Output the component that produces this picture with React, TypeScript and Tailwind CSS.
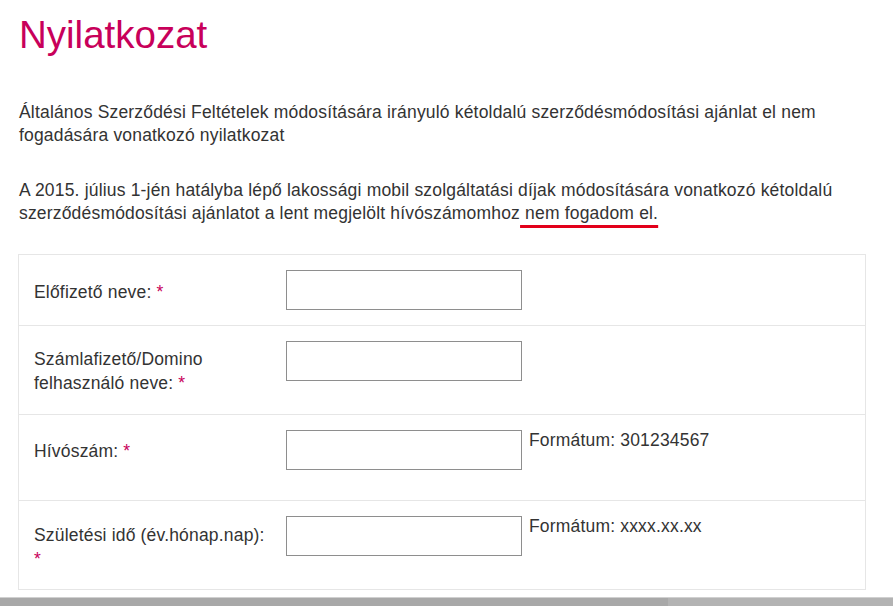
import React from 'react';

type Row = {
    label: React.ReactNode;
    hint?: string;
    h: string;
    pt: string;
};

const Star = () => <span className="text-[#c8005a]">*</span>;

const rows: Row[] = [
    { label: <>Előfizető neve: <Star /></>, h: 'h-[71px]', pt: 'pt-[25px]' },
    { label: <>Számlafizető/Domino<br />felhasználó neve: <Star /></>, h: 'h-[89px]', pt: 'pt-[21px]' },
    { label: <>Hívószám: <Star /></>, hint: 'Formátum: 301234567', h: 'h-[86px]', pt: 'pt-[24px]' },
    { label: <>Születési idő (év.hónap.nap):<br /><Star /></>, hint: 'Formátum: xxxx.xx.xx', h: 'h-[88px]', pt: 'pt-[22px]' },
];

const App = () => {
    return (
        <div className="min-h-screen bg-white text-[#333333] font-['Liberation_Sans',Arial,sans-serif]">
            <div className="pl-[18px] pr-[27px]">
                <h1 className="pt-[16px] pl-[1px] text-[38.5px] leading-[38px] text-[#c8005a]">Nyilatkozat</h1>

                <p className="mt-[47px] pl-[1px] text-[17.5px] leading-[23px] tracking-[0.18px]">
                    Általános Szerződési Feltételek módosítására irányuló kétoldalú szerződésmódosítási ajánlat el nem fogadására vonatkozó nyilatkozat
                </p>

                <p className="mt-[32px] pl-[1px] text-[17.5px] leading-[23px] tracking-[0.18px]">
                    A 2015. július 1-jén hatályba lépő lakossági mobil szolgáltatási díjak módosítására vonatkozó kétoldalú szerződésmódosítási ajánlatot a lent megjelölt hívószámomhoz
                    <span className="underline decoration-[#e2001a] decoration-[3px] underline-offset-[6px]"> nem fogadom el.</span>
                </p>

                <div className="mt-[29px] border border-[#e6e6e6]">
                    {rows.map((row, i) => (
                        <div
                            key={i}
                            className={`flex text-[17.5px] leading-[24px] tracking-[0.18px] ${row.h} ${i < rows.length - 1 ? 'border-b border-[#e6e6e6]' : ''}`}
                        >
                            <div className={`w-[267px] pl-[15px] ${row.pt}`}>{row.label}</div>
                            <div className="flex items-start pt-[15px]">
                                <input
                                    type="text"
                                    className="w-[236px] h-[40px] border border-[#8e8e8e] bg-white outline-none"
                                />
                                {row.hint && <span className="ml-[7px] -mt-[2px]">{row.hint}</span>}
                            </div>
                        </div>
                    ))}
                </div>
            </div>

            <div className="mt-[7px] h-[9px] flex bg-[#a8a8a8] border-t border-[#d0d0d0]">
                <div className="ml-[668px] flex-1 bg-[#b3b3b3]" />
            </div>
        </div>
    );
};

export default App;
